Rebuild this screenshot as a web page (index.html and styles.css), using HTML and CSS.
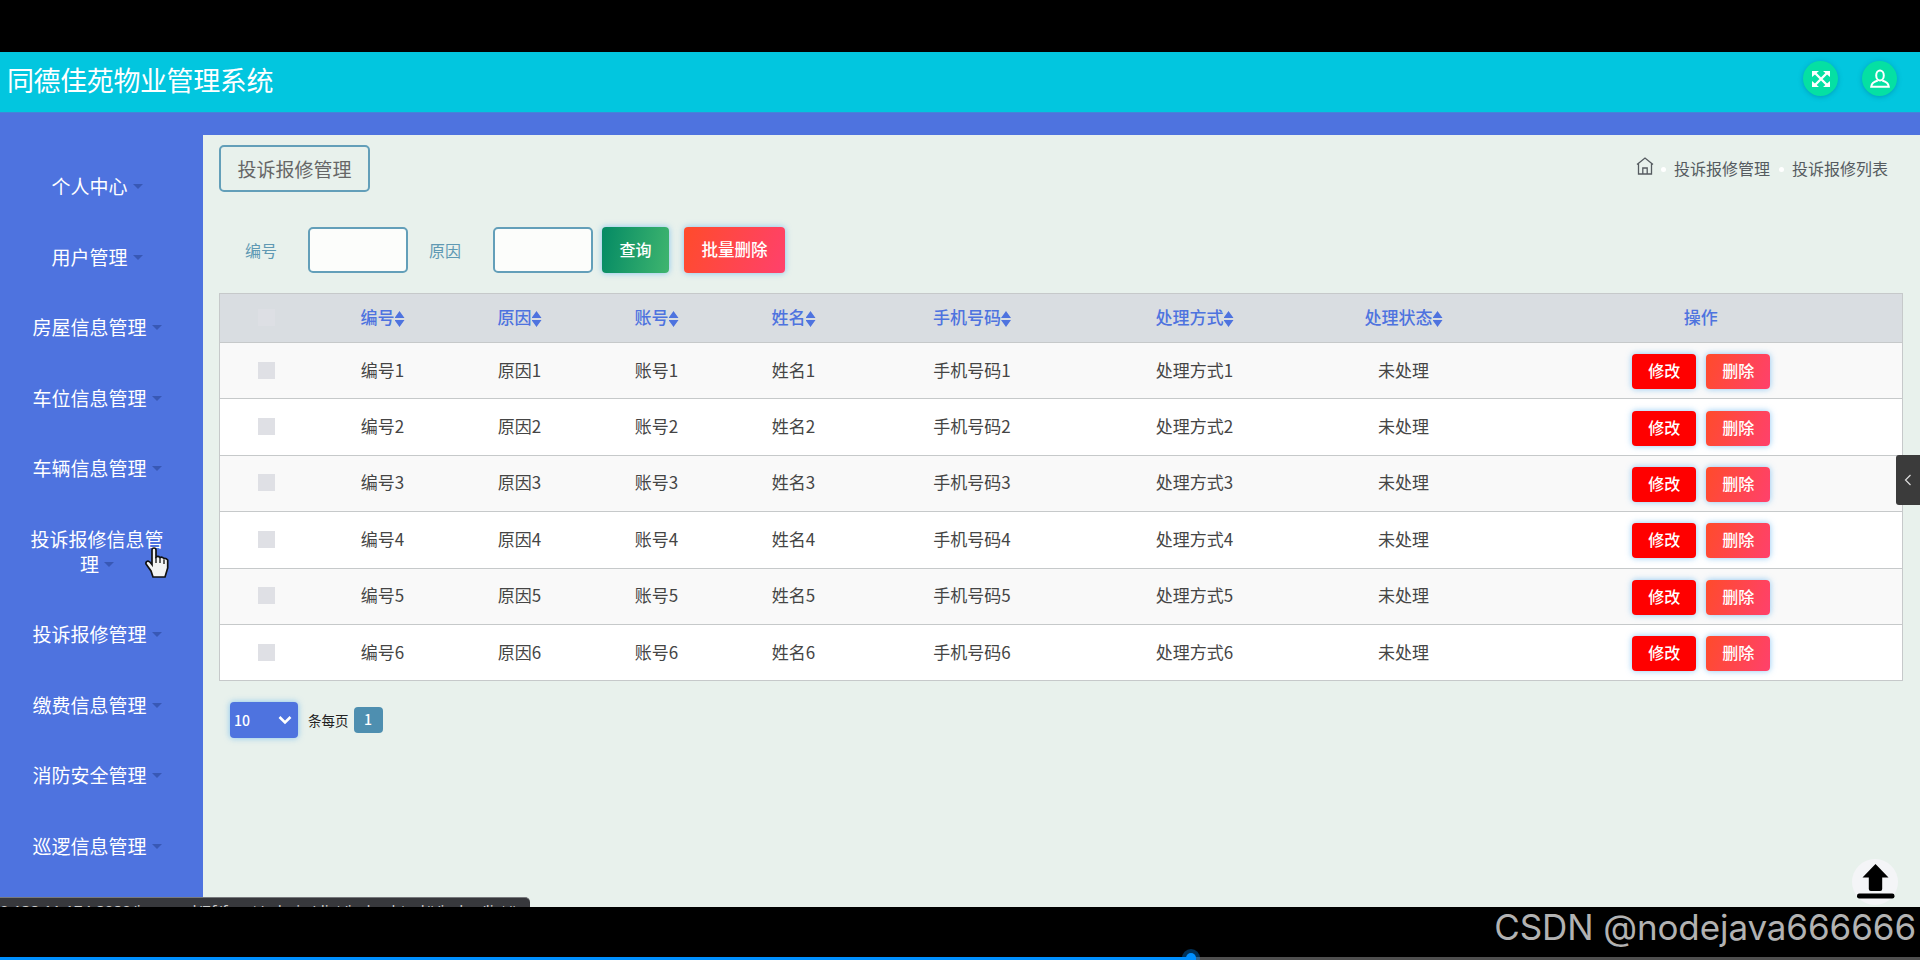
FILE: index.html
```html
<!DOCTYPE html>
<html lang="zh-CN">
<head>
<meta charset="utf-8">
<title>同德佳苑物业管理系统</title>
<link rel="stylesheet" href="styles.css">
</head>
<body>
<div class="screen">
  <header class="topbar">
    <h1 class="brand">同德佳苑物业管理系统</h1>
    <div class="tools">
      <span class="round"><svg width="20" height="20" viewBox="0 0 20 20"><path d="M4 4l12 12M16 4L4 16" stroke="#fff" stroke-width="2.4"/><path d="M1 2h7l-7 6zM19 2h-7l7 6zM1 18h7l-7-6zM19 18h-7l7-6z" fill="#fff"/></svg></span>
      <span class="round"><svg width="20" height="20" viewBox="0 0 20 20" fill="none" stroke="#fff" stroke-width="2"><ellipse cx="10" cy="6.4" rx="3.8" ry="5"/><path d="M7.800 11.500C4 12.500 1.500 14 1.200 17.800h17.600c-.3-3.800-2.800-5.300-6.600-6.300"/></svg></span>
    </div>
  </header>
  <div class="body">
    <nav class="side">
      <a class="item"><span>个人中心<i class="caret"></i></span></a>
      <a class="item"><span>用户管理<i class="caret"></i></span></a>
      <a class="item"><span>房屋信息管理<i class="caret"></i></span></a>
      <a class="item"><span>车位信息管理<i class="caret"></i></span></a>
      <a class="item"><span>车辆信息管理<i class="caret"></i></span></a>
      <a class="item"><span>投诉报修信息管理<i class="caret"></i></span></a>
      <a class="item"><span>投诉报修管理<i class="caret"></i></span></a>
      <a class="item"><span>缴费信息管理<i class="caret"></i></span></a>
      <a class="item"><span>消防安全管理<i class="caret"></i></span></a>
      <a class="item"><span>巡逻信息管理<i class="caret"></i></span></a>
    </nav>
    <main class="content">
      <div class="head">
        <div class="page-title">投诉报修管理</div>
        <div class="crumbs">
          <svg class="home" width="18" height="18" viewBox="0 0 18 18" fill="none" stroke="#555b60" stroke-width="1.3"><path d="M1 7.500L9 1l8 6.500M2.500 6.500v10.500h13V6.500M6.800 17v-6h4.400v6"/></svg>
          <i class="dot"></i><span>投诉报修管理</span><i class="dot"></i><span>投诉报修列表</span>
        </div>
      </div>
      <form class="filters">
        <label class="lab">编号</label><input class="field" type="text">
        <label class="lab lab2">原因</label><input class="field" type="text">
        <button class="btn query" type="button">查询</button>
        <button class="btn batch" type="button">批量删除</button>
      </form>
      <table class="grid">
        <colgroup><col class="c0"><col class="c1"><col class="c1"><col class="c1"><col class="c1"><col class="c5"><col class="c6"><col class="c7"><col></colgroup>
        <thead><tr><th><i class="check"></i></th><th>编号<i class="sort"></i></th><th>原因<i class="sort"></i></th><th>账号<i class="sort"></i></th><th>姓名<i class="sort"></i></th><th>手机号码<i class="sort"></i></th><th>处理方式<i class="sort"></i></th><th>处理状态<i class="sort"></i></th><th>操作</th></tr></thead>
        <tbody>
          <tr><td><i class="check"></i></td><td>编号1</td><td>原因1</td><td>账号1</td><td>姓名1</td><td>手机号码1</td><td>处理方式1</td><td>未处理</td><td class="act"><div class="ops"><button class="btn edit">修改</button><button class="btn del">删除</button></div></td></tr>
          <tr><td><i class="check"></i></td><td>编号2</td><td>原因2</td><td>账号2</td><td>姓名2</td><td>手机号码2</td><td>处理方式2</td><td>未处理</td><td class="act"><div class="ops"><button class="btn edit">修改</button><button class="btn del">删除</button></div></td></tr>
          <tr><td><i class="check"></i></td><td>编号3</td><td>原因3</td><td>账号3</td><td>姓名3</td><td>手机号码3</td><td>处理方式3</td><td>未处理</td><td class="act"><div class="ops"><button class="btn edit">修改</button><button class="btn del">删除</button></div></td></tr>
          <tr><td><i class="check"></i></td><td>编号4</td><td>原因4</td><td>账号4</td><td>姓名4</td><td>手机号码4</td><td>处理方式4</td><td>未处理</td><td class="act"><div class="ops"><button class="btn edit">修改</button><button class="btn del">删除</button></div></td></tr>
          <tr><td><i class="check"></i></td><td>编号5</td><td>原因5</td><td>账号5</td><td>姓名5</td><td>手机号码5</td><td>处理方式5</td><td>未处理</td><td class="act"><div class="ops"><button class="btn edit">修改</button><button class="btn del">删除</button></div></td></tr>
          <tr><td><i class="check"></i></td><td>编号6</td><td>原因6</td><td>账号6</td><td>姓名6</td><td>手机号码6</td><td>处理方式6</td><td>未处理</td><td class="act"><div class="ops"><button class="btn edit">修改</button><button class="btn del">删除</button></div></td></tr>
        </tbody>
      </table>
      <div class="pager">
        <div class="size"><span>10</span><svg width="14" height="10" viewBox="0 0 14 10"><path d="M1.500 2L7 7.500 12.500 2" fill="none" stroke="#fff" stroke-width="2.6"/></svg></div>
        <span class="per">条每页</span>
        <span class="num">1</span>
      </div>
    </main>
  </div>
  <footer class="player">
    <span class="mark">CSDN @nodejava666666</span>
    <div class="rail"><div class="played"></div></div>
  </footer>
  <div class="status">0.138.11.174:8080/jspmxcd/Zf/front/admin/dist/index.html#/index/list#</div>
  <div class="drawer"><svg width="8" height="12" viewBox="0 0 8 12"><path d="M6.500 1L1.500 6l5 5" fill="none" stroke="#ddd" stroke-width="1.200"/></svg></div>
  <div class="totop"><svg width="46" height="46" viewBox="0 0 46 46"><path d="M23.500 5l13 13.500h-6.300V30q0 2-2 2h-9.400q-2 0-2-2V18.500H10.500z"/><rect x="5" y="34.500" width="37.500" height="5" rx="2.200"/></svg></div>
  <svg class="hand" width="25" height="32" viewBox="0 0 25 32"><path d="M7 3q0-2 2-2t2 2v7q2-1.500 4 .5 2-1 4 1 2-.5 3.700 1.500v8L20 30H8l-2-6-5-7q-.5-2.500 2-3 2 .5 4 3.500z" fill="#f4f4f4" stroke="#111" stroke-width="1.700"/><path d="M11 10v6M15 11v5M19 12.500V17" stroke="#111" stroke-width="1.300"/></svg>
  <i class="knob"></i>
</div>
</body>
</html>
```

FILE: styles.css
```css
* { box-sizing: border-box; }
body { margin: 0; background: #000; font-family: "Noto Sans CJK SC", sans-serif; }
i { font-style: normal; }
.screen { position: relative; width: 1920px; height: 960px; padding-top: 52px; overflow: hidden; background: #000; }

.topbar { display: flex; justify-content: space-between; height: 60px; padding: 0 23px 0 7px; background: #02c6df; }
.brand { margin: 0; font-size: 27px; font-weight: 400; line-height: 55px; letter-spacing: -0.4px; color: #fff; }
.tools { display: flex; gap: 24px; padding-top: 9px; }
.round { display: flex; align-items: center; justify-content: center; width: 35px; height: 35px; border-radius: 50%; background: #05e0a3; box-shadow: 0 1px 5px rgba(0, 90, 120, .35); }

.body { display: flex; height: 795px; padding-top: 22px; background: #4e73df; border-top: 1px solid #4386d8; }
.side { width: 203px; flex: none; padding: 28px 9px 0 0; }
.item { display: flex; justify-content: center; padding: 0 0 45.500px; font-size: 19px; line-height: 25px; text-align: center; color: #fff; }
.item span { width: 140px; }
.item:first-child { padding-top: 10px; }
.caret { display: inline-block; margin-left: 5px; vertical-align: 5px; border: 5px solid transparent; border-top-color: #3858b5; border-bottom: 0; }
.content { flex: 1; padding: 10px 17px 0 16px; background: #e8f1ec; border-right: 1px solid #c8d2cf; }

.head { display: flex; justify-content: space-between; height: 47px; }
.page-title { width: 151px; height: 47px; border: 2px solid #639fb9; border-radius: 5px; font-size: 19px; line-height: 43px; text-align: center; color: #666; }
.crumbs { display: flex; align-items: center; padding: 0 15px 2px 0; font-size: 16px; color: #555b60; }
.home { margin: -3px 7px 0 0; }
.dot { width: 5px; height: 5px; border-radius: 50%; background: #fff; margin: 4px 8px 0 0; }
.crumbs span + .dot { margin: 4px 8px 0 9px; }

.filters { display: flex; align-items: center; height: 46px; margin: 35px 0 20px; }
.lab { width: 89px; padding: 0 0 1px 26px; font-size: 16px; color: #5f99b3; }
.lab2 { width: 85px; padding-left: 21px; }
.field { width: 100px; height: 46px; border: 2px solid #639fb9; border-radius: 5px; background: #fcfdfb; }
.btn { padding: 0 0 2px; border: 0; border-radius: 4px; font: 500 16px "Noto Sans CJK SC", sans-serif; color: #fff; box-shadow: 0 0 6px rgba(80, 170, 240, .65); }
.query { width: 67px; height: 46px; margin-left: 9px; background: linear-gradient(100deg, #048a64, #3fb56f); }
.batch { width: 101px; height: 46px; margin-left: 15px; font-size: 16.500px; background: linear-gradient(110deg, #ff4b2b, #ff416c); }

.grid { width: 1684px; table-layout: fixed; border-collapse: collapse; border: 1px solid #c6c9ca; font-size: 17px; color: #454545; background: #fff; }
.c0 { width: 95px; } .c1 { width: 137px; } .c5 { width: 220px; } .c6 { width: 225px; } .c7 { width: 193px; }
.grid th { height: 49px; padding: 0 1px 2px 0; line-height: 24px; font-weight: 500; color: #4e73df; background: #d9dde1; border-bottom: 1px solid #c6c9ca; }
.grid td { height: 56.400px; padding: 0 1px 3px 0; text-align: center; border-bottom: 1px solid #c6c9ca; }
.grid .act { padding: 0; }
.grid tbody tr:nth-child(odd) { background: #f9f9f9; }
.check { display: inline-block; width: 17px; height: 17px; vertical-align: -2px; background: #dfe0e5; }
.grid th .check { background: #dddfe4; }
.sort { display: inline-block; width: 10px; height: 16px; vertical-align: -3px; background: #4e73df; clip-path: polygon(50% 0, 100% 43%, 0 43%, 0 57%, 100% 57%, 50% 100%, 0 57%, 0 43%); }
.ops { display: flex; justify-content: center; gap: 10px; padding-top: 2px; }
.ops .btn { width: 64px; height: 35px; padding-bottom: 3px; }
.edit { background: #f00; }
.del { background: linear-gradient(110deg, #ff4b2b, #ff416c); }

.pager { display: flex; align-items: center; padding: 21px 0 0 11px; height: 57px; }
.size { display: flex; align-items: center; justify-content: space-between; width: 68px; height: 36px; padding: 0 6px 1px 4px; border-radius: 4px; background: #4e73df; color: #fff; font-size: 14px; font-weight: 500; box-shadow: 0 0 6px rgba(80, 170, 240, .65); }
.per { margin-left: 10px; font-size: 13.500px; color: #222; }
.num { width: 29px; height: 26px; margin: -1px 0 0 5px; border-radius: 4px; background: #4e8fb0; color: #fff; font-size: 14px; font-weight: 500; line-height: 25px; text-align: center; }

.player { display: flex; flex-direction: column; align-items: flex-end; justify-content: space-between; height: 53px; background: #000; }
.mark { padding-right: 4px; font: 35px/40px Inter, sans-serif; letter-spacing: -0.1px; color: #b2b2b2; white-space: nowrap; }
.rail { width: 100%; height: 3px; background: #4f4f4f; }
.played { width: 1196px; height: 3px; background: #0090ff; }

.status { position: absolute; left: 0; top: 897px; width: 530px; height: 10px; padding: 3px 0 0; overflow: hidden; border-radius: 0 5px 0 0; border-top: 1px solid #77797c; background: #37383c; font: 15px/18px "Noto Sans", sans-serif; letter-spacing: .2px; color: #ccc; white-space: nowrap; }
.drawer { position: absolute; left: 1896px; top: 455px; display: flex; align-items: center; justify-content: center; width: 24px; height: 50px; border-radius: 3px 0 0 3px; background: #3b3b3b; }
.totop { position: absolute; left: 1852px; top: 859px; width: 46px; height: 46px; border-radius: 50%; background: #f4f5f7; }
.hand { position: absolute; left: 145px; top: 547px; }
.knob { position: absolute; left: 1186px; top: 953px; width: 10px; height: 10px; border-radius: 50%; background: #0090ff; box-shadow: 0 0 0 4px rgba(0, 144, 255, .35); }
```
